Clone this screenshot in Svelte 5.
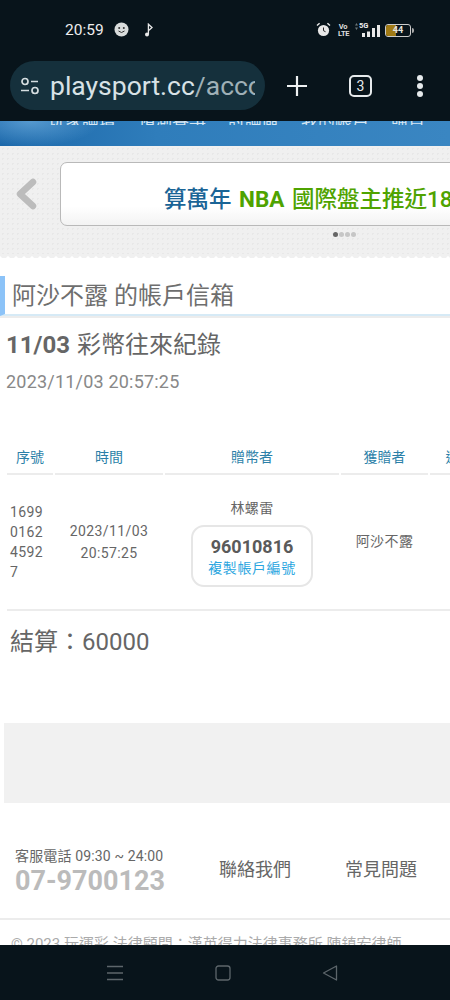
<script>
	const rows = [
		{
			id: '1699016245927',
			date: '2023/11/03',
			time: '20:57:25',
			sender: '林螺雷',
			account: '96010816',
			receiver: '阿沙不露'
		}
	];
	const navLinks = ['玩家論壇', '預測賽事', '討論區', '我的帳戶', '購買'];
</script>

<div class="phone">
	<div class="status">
		<span class="clock">20:59</span>
		<svg class="face" width="15" height="15" viewBox="0 0 15 15">
			<circle cx="7.5" cy="7.5" r="7" fill="#d9dcdc" />
			<circle cx="5.2" cy="6" r="1" fill="#333" />
			<circle cx="9.8" cy="6" r="1" fill="#333" />
			<path d="M4.5 9q3 3 6 0" fill="none" stroke="#333" stroke-width="1" />
		</svg>
		<svg class="note" width="10" height="14" viewBox="0 0 10 14">
			<circle cx="3" cy="11.5" r="2" fill="#e8e8e8" />
			<path d="M4.4 11.5V1.2l3.6 3.4-3 2.6" fill="none" stroke="#e8e8e8" stroke-width="1.3" />
		</svg>
		<span class="spacer"></span>
		<svg class="alarm" width="15" height="15" viewBox="0 0 15 15">
			<circle cx="7.5" cy="8.5" r="5.6" fill="#e8e8e8" />
			<path d="M7.5 5.5v3.2l2 1" fill="none" stroke="#222" stroke-width="1" />
			<path d="M1 3.6 3.6 1.2M14 3.6 11.4 1.2" stroke="#e8e8e8" stroke-width="1.4" />
		</svg>
		<span class="volte">Vo<br />LTE</span>
		<span class="signal">
			<svg class="arrows" width="3" height="7" viewBox="0 0 3 7">
				<path d="M1.5 0 3 2.500H0zM1.5 7 0 4.500h3z" fill="#6d7679" />
			</svg>
			<span class="five-g">5G</span>
			<svg class="bars" width="18" height="12" viewBox="0 0 18 12">
				<rect x="0" y="8" width="3" height="4" fill="#e8e8e8" />
				<rect x="5" y="6.500" width="3" height="5.500" fill="#e8e8e8" />
				<rect x="10" y="3" width="3" height="9" fill="#e8e8e8" />
				<rect x="15" y="0" width="3" height="12" fill="#e8e8e8" />
			</svg>
		</span>
		<span class="battery"><span class="charge"></span><span class="level">44</span></span>
		<span class="battery-tip"></span>
	</div>

	<div class="browser">
		<div class="url">
			<svg class="tune" width="20" height="18" viewBox="0 0 20 18">
				<circle cx="5" cy="4.500" r="3" fill="none" stroke="#d5dde0" stroke-width="1.7" />
				<path d="M11 4.500h7M1 13.500h8" stroke="#d5dde0" stroke-width="1.7" />
				<circle cx="15" cy="13.500" r="3" fill="none" stroke="#d5dde0" stroke-width="1.7" />
			</svg>
			<span class="url-text">playsport.cc<span class="url-path">/acco</span></span>
		</div>
		<svg class="plus" width="22" height="22" viewBox="0 0 22 22">
			<path d="M11 1v20M1 11h20" stroke="#eef1f2" stroke-width="2.2" />
		</svg>
		<span class="tabs">3</span>
		<span class="dots"><i></i><i></i><i></i></span>
	</div>

	<div class="content">
		<nav class="site-nav">
			{#each navLinks as link}
				<span>{link}</span>
			{/each}
		</nav>

		<section class="promo">
			<div class="promo-row">
				<svg class="chevron" width="22" height="32" viewBox="0 0 22 32">
					<path d="M18 4 5 16l13 12" fill="none" stroke="#bcbcbc" stroke-width="6.500" stroke-linecap="round" stroke-linejoin="round" />
				</svg>
				<div class="promo-card">
					算萬年 <b>NBA</b> <span>國際盤主推近18場</span>
				</div>
			</div>
			<div class="pager"><i class="on"></i><i></i><i></i><i></i></div>
		</section>
		<div class="scallop"></div>

		<h1>阿沙不露 的帳戶信箱</h1>
		<div class="rule"></div>

		<h2><b>11/03</b> 彩幣往來紀錄</h2>
		<p class="stamp">2023/11/03 20:57:25</p>

		<div class="table-wrap">
			<table>
				<thead>
					<tr>
						<th class="c-id">序號</th>
						<th class="c-time">時間</th>
						<th class="c-from">贈幣者</th>
						<th class="c-to">獲贈者</th>
						<th class="c-amount">運彩幣</th>
					</tr>
				</thead>
			</table>
			{#each rows as row}
				<div class="row">
					<div class="id">{row.id}</div>
					<div class="when">{row.date}<span class="time">{row.time}</span></div>
					<div class="from">
						<div class="sender">{row.sender}</div>
						<div class="copy">
							<strong>{row.account}</strong>
							<span>複製帳戶編號</span>
						</div>
					</div>
					<div class="to">{row.receiver}</div>
				</div>
			{/each}
		</div>

		<div class="total">結算：60000</div>
		<div class="ad"></div>

		<footer>
			<div class="service">
				<div class="hours">客服電話 09:30 ~ 24:00</div>
				<div class="tel">07-9700123</div>
			</div>
			<span class="foot-link first">聯絡我們</span>
			<span class="foot-link">常見問題</span>
		</footer>
		<div class="copyright">© 2023 玩運彩 法律顧問：漢英得力法律事務所 陳鎮宏律師</div>
	</div>

	<div class="softkeys">
		<svg width="18" height="16" viewBox="0 0 18 16">
			<path d="M1 1.500h16M1 8h16M1 14.500h16" stroke="#5d666b" stroke-width="1.300" />
		</svg>
		<svg width="16" height="16" viewBox="0 0 16 16">
			<rect x="1" y="1" width="14" height="14" rx="2.500" fill="none" stroke="#5d666b" stroke-width="1.300" />
		</svg>
		<svg width="16" height="16" viewBox="0 0 16 16">
			<path d="M14.500 1v14L1.500 8z" fill="none" stroke="#5d666b" stroke-width="1.300" stroke-linejoin="round" />
		</svg>
	</div>
</div>

<style>
	:global(body) {
		margin: 0;
		background: #fff;
	}

	.phone {
		width: 450px;
		height: 1000px;
		display: flex;
		flex-direction: column;
		overflow: hidden;
		font-family: Roboto, 'Noto Sans CJK TC', sans-serif;
		color: #666;
	}

	.status {
		height: 61px;
		flex: none;
		box-sizing: border-box;
		padding: 21px 0 0 65px;
		background: #08141b;
		display: flex;
		align-items: flex-start;
		color: #eee;
	}

	.clock {
		font-size: 15.5px;
		line-height: 18px;
		width: 49px;
	}

	.face {
		margin: 1px 0 0 0;
	}

	.note {
		margin: 2px 0 0 15px;
	}

	.spacer {
		flex: 1;
	}

	.alarm {
		margin-top: 1px;
	}

	.volte {
		font-size: 7.5px;
		line-height: 7px;
		font-weight: 700;
		letter-spacing: -0.3px;
		width: 10px;
		margin: 2px 0 0 7px;
		text-align: center;
		color: #ddd;
	}

	.signal {
		position: relative;
		margin: 2px 0 0 7px;
		width: 25px;
		height: 14px;
	}

	.arrows {
		position: absolute;
		left: 0;
		top: 0;
	}

	.bars {
		position: absolute;
		left: 7px;
		top: 2px;
	}

	.five-g {
		position: absolute;
		left: 4px;
		top: -1px;
		font-size: 7.5px;
		line-height: 8px;
		font-weight: 700;
		background: #08141b;
		padding-right: 1px;
	}

	.battery {
		position: relative;
		box-sizing: border-box;
		width: 26px;
		height: 13px;
		margin: 3px 0 0 5px;
		border: 1px solid #ccc;
		border-radius: 3px;
		overflow: hidden;
	}

	.charge {
		display: block;
		width: 10px;
		height: 100%;
		background: #a07a14;
	}

	.level {
		position: absolute;
		inset: 0;
		text-align: center;
		font-size: 9px;
		line-height: 11px;
		font-weight: 700;
		color: #e8e8e0;
	}

	.battery-tip {
		width: 2px;
		height: 5px;
		margin: 7px 36px 0 1px;
		background: #aaa;
		border-radius: 0 2px 2px 0;
	}

	.browser {
		height: 60px;
		flex: none;
		box-sizing: border-box;
		padding-bottom: 11px;
		background: #08141b;
		display: flex;
		align-items: center;
	}

	.url {
		width: 255px;
		height: 49px;
		margin-left: 10px;
		box-sizing: border-box;
		padding-left: 10px;
		border-radius: 25px;
		background: #15303c;
		display: flex;
		align-items: center;
		overflow: hidden;
		flex: none;
	}

	.tune {
		flex: none;
	}

	.url-text {
		display: block;
		width: 205px;
		flex: none;
		margin-left: 10px;
		overflow: hidden;
		white-space: nowrap;
		font-size: 26.5px;
		line-height: 40px;
		color: #d8e2e6;
	}

	.url-path {
		color: #9fb0b7;
	}

	.plus {
		margin-left: 21px;
		flex: none;
	}

	.tabs {
		box-sizing: border-box;
		width: 23px;
		height: 22px;
		margin-left: 41px;
		border: 2px solid #e6eaec;
		border-radius: 5px;
		text-align: center;
		font-size: 14px;
		line-height: 18px;
		color: #e6eaec;
		flex: none;
	}

	.dots {
		display: flex;
		flex-direction: column;
		gap: 2px;
		margin-left: 45px;
	}

	.dots i {
		width: 6px;
		height: 6px;
		border-radius: 50%;
		background: #e6eaec;
	}

	.content {
		flex: 1;
		min-height: 0;
		overflow: hidden;
		background: #fff;
	}

	.site-nav {
		height: 25px;
		box-sizing: border-box;
		padding-left: 48px;
		display: flex;
		gap: 22px;
		overflow: hidden;
		white-space: nowrap;
		background:
			radial-gradient(ellipse 70px 26px at 30px 0, rgba(130, 190, 235, 0.55), transparent),
			linear-gradient(90deg, #1c68aa, #2f7dbb 35%, #3a86c2);
		box-shadow: 0 1px 2px rgba(0, 0, 0, 0.3);
		color: #d5e6f3;
		font-size: 17px;
		font-weight: 400;
	}

	.site-nav span {
		flex: none;
		height: 4px;
		overflow: hidden;
		line-height: 0;
	}

	.promo {
		height: 108px;
		box-sizing: border-box;
		padding-top: 16px;
		background-color: #f0f0f0;
		background-image: radial-gradient(#e8e8e8 1px, transparent 1px);
		background-size: 5px 5px;
		overflow: hidden;
	}

	.promo-row {
		display: flex;
		align-items: center;
	}

	.chevron {
		flex: none;
		margin-left: 15px;
	}

	.promo-card {
		flex: none;
		width: 440px;
		height: 64px;
		margin-left: 23px;
		box-sizing: border-box;
		padding-left: 103px;
		border: 1.500px solid #b9b9b9;
		border-radius: 7px;
		background: linear-gradient(#fff 70%, #f3f3f3);
		font-size: 22.5px;
		line-height: 73px;
		font-weight: 500;
		word-spacing: 2px;
		white-space: nowrap;
		overflow: hidden;
		color: #1a6496;
	}

	.promo-card b {
		font-weight: 700;
		color: #4fa300;
	}

	.promo-card span {
		color: #4fa300;
	}

	.pager {
		display: flex;
		gap: 1px;
		margin: 6px 0 0 333px;
	}

	.pager i {
		width: 5px;
		height: 5px;
		border-radius: 50%;
		background: #c6c6c6;
	}

	.pager i.on {
		background: #666;
	}

	.scallop {
		height: 4px;
		background-image: radial-gradient(circle at 4px 0, #f0f0f0 4px, #fff 4.500px);
		background-size: 8px 4px;
	}

	h1 {
		margin: 18px 0 0;
		height: 40px;
		box-sizing: border-box;
		padding-left: 7px;
		border-left: 5px solid #8cc3f8;
		border-bottom: 2px solid #d6eaf6;
		font-size: 24px;
		line-height: 41px;
		font-weight: 400;
		color: #6e6e6e;
	}

	.rule {
		height: 2px;
		background: #ececec;
	}

	h2 {
		margin: 12px 0 0 6px;
		font-size: 24px;
		line-height: 30px;
		font-weight: 400;
		word-spacing: 1px;
		color: #666;
	}

	h2 b {
		font-weight: 700;
	}

	.stamp {
		margin: 10px 0 0 6px;
		font-size: 18px;
		line-height: 24px;
		letter-spacing: 0.2px;
		color: #888;
	}

	.table-wrap {
		margin: 47px 0 0 7px;
		overflow: hidden;
		font-size: 14px;
		line-height: 20px;
		color: #666;
		letter-spacing: 0.4px;
	}

	table {
		width: 500px;
		margin-left: -2px;
		table-layout: fixed;
		border-collapse: separate;
		border-spacing: 2px 0;
		letter-spacing: 0;
	}

	th {
		height: 32px;
		padding: 0;
		font-weight: 400;
		color: #2b7fa8;
		border-bottom: 2px solid #ececec;
	}

	.c-id {
		width: 46px;
	}

	.c-time {
		width: 108px;
	}

	.c-from {
		width: 174px;
	}

	.c-to {
		width: 87px;
	}

	.row {
		height: 136px;
		box-sizing: border-box;
		border-bottom: 2px solid #ececec;
		display: flex;
		align-items: center;
		text-align: center;
	}

	.id {
		width: 46px;
		flex: none;
		box-sizing: border-box;
		padding: 0 9px 0 3px;
		text-align: left;
		word-break: break-all;
	}

	.when {
		width: 108px;
		margin-left: 2px;
		flex: none;
	}

	.time {
		display: block;
		margin-top: 2px;
	}

	.from {
		width: 174px;
		margin-left: 2px;
		flex: none;
	}

	.sender {
		margin-bottom: 7px;
	}

	.copy {
		box-sizing: border-box;
		width: 122px;
		height: 62px;
		margin: 0 auto;
		padding-top: 9px;
		border: 2px solid #e6e6e6;
		border-radius: 13px;
		display: flex;
		flex-direction: column;
		align-items: center;
	}

	.copy strong {
		font-size: 18px;
		line-height: 22px;
		font-weight: 700;
		letter-spacing: 0;
		color: #5a5a5a;
	}

	.copy span {
		line-height: 20px;
		letter-spacing: 0.6px;
		color: #2ba6e0;
	}

	.to {
		width: 87px;
		margin-left: 2px;
		padding-bottom: 2px;
		flex: none;
	}

	.total {
		margin: 12px 0 0 10px;
		font-size: 24px;
		line-height: 38px;
		color: #666;
	}

	.ad {
		height: 80px;
		margin: 62px 0 0 4px;
		background: #f1f1f1;
	}

	footer {
		height: 117px;
		box-sizing: border-box;
		padding: 44px 0 0 15px;
		border-bottom: 2px solid #ececec;
		display: flex;
		align-items: flex-start;
	}

	.service {
		width: 204px;
		flex: none;
	}

	.hours {
		font-size: 14px;
		line-height: 18px;
		letter-spacing: 0.15px;
		color: #666;
	}

	.tel {
		font-size: 27px;
		line-height: 33px;
		font-weight: 700;
		color: #bbb;
	}

	.foot-link {
		flex: none;
		margin: 10px 0 0 54px;
		font-size: 18px;
		line-height: 26px;
		color: #666;
	}

	.foot-link.first {
		margin-left: 0;
	}

	.copyright {
		margin: 12px 0 0 11px;
		font-size: 15px;
		line-height: 24px;
		white-space: nowrap;
		color: #aaa;
	}

	.softkeys {
		height: 55px;
		flex: none;
		box-sizing: border-box;
		padding: 0 112px 0 106px;
		background: #08141b;
		display: flex;
		align-items: center;
		justify-content: space-between;
	}
</style>
